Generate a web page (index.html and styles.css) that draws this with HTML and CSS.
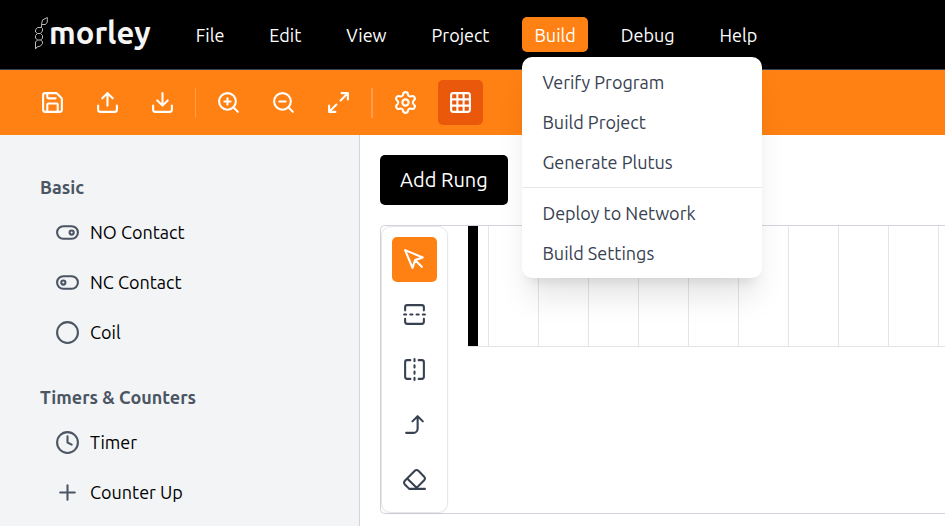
FILE: index.html
```html
<!DOCTYPE html>
<html lang="en">
<head>
<meta charset="utf-8">
<meta name="viewport" content="width=device-width, initial-scale=1">
<title>Morley</title>
<link rel="stylesheet" href="styles.css">
</head>
<body>
<header class="header">
  <a class="logo" href="#" aria-label="morley">
    <svg class="logo-mark" viewBox="0 0 14 34" aria-hidden="true"><path d="M13.3 1.5 L8.5 4 L7.5 8.5 L11.5 8.5 L13.3 6 Z M7.5 8.5 L7.5 11.5 L3.5 11.5 L1.5 14 V16 L3.5 17.5 H6.5 L8.5 15 V12.5 L7.5 11.5 M3.5 17.5 L1.5 19.5 V22 L3.5 24 H6.5 L8.5 22.5 V19.5 L6.5 17.5 M3.5 24 L1.5 26 V33 L3 31 L6.5 30 L8.5 27.5 V25.5 L6.5 24"/></svg>
    <span class="logo-text">morley</span>
  </a>
  <nav class="menubar">
    <button class="menu-button">File</button>
    <button class="menu-button">Edit</button>
    <button class="menu-button">View</button>
    <button class="menu-button">Project</button>
    <div class="menu">
      <button class="menu-button open" aria-expanded="true">Build</button>
      <div class="dropdown">
        <button class="dropdown-item">Verify Program</button>
        <button class="dropdown-item">Build Project</button>
        <button class="dropdown-item">Generate Plutus</button>
        <hr class="dropdown-line">
        <button class="dropdown-item">Deploy to Network</button>
        <button class="dropdown-item">Build Settings</button>
      </div>
    </div>
    <button class="menu-button">Debug</button>
    <button class="menu-button">Help</button>
  </nav>
</header>
<div class="toolbar">
  <button class="tool" aria-label="Save"><svg class="icon" viewBox="0 0 24 24"><path d="M15.2 3a2 2 0 0 1 1.4.6l3.8 3.8a2 2 0 0 1 .6 1.4V19a2 2 0 0 1-2 2H5a2 2 0 0 1-2-2V5a2 2 0 0 1 2-2z"/><path d="M17 21v-7a1 1 0 0 0-1-1H8a1 1 0 0 0-1 1v7M7 3v4a1 1 0 0 0 1 1h7"/></svg></button>
  <button class="tool" aria-label="Upload"><svg class="icon" viewBox="0 0 24 24"><path d="M21 15v4a2 2 0 0 1-2 2H5a2 2 0 0 1-2-2v-4M17 8l-5-5-5 5M12 3v12"/></svg></button>
  <button class="tool" aria-label="Download"><svg class="icon" viewBox="0 0 24 24"><path d="M21 15v4a2 2 0 0 1-2 2H5a2 2 0 0 1-2-2v-4M7 10l5 5 5-5M12 15V3"/></svg></button>
  <span class="divider"></span>
  <button class="tool" aria-label="Zoom in"><svg class="icon" viewBox="0 0 24 24"><circle cx="11" cy="11" r="8"/><path d="M21 21l-4.35-4.35M11 8v6M8 11h6"/></svg></button>
  <button class="tool" aria-label="Zoom out"><svg class="icon" viewBox="0 0 24 24"><circle cx="11" cy="11" r="8"/><path d="M21 21l-4.35-4.35M8 11h6"/></svg></button>
  <button class="tool" aria-label="Fit to view"><svg class="icon" viewBox="0 0 24 24"><path d="M15 3h6v6M9 21H3v-6M21 3l-7 7M3 21l7-7"/></svg></button>
  <span class="divider wide"></span>
  <button class="tool" aria-label="Settings"><svg class="icon" viewBox="0 0 24 24"><path d="M9.671 4.136a2.34 2.34 0 0 1 4.659 0 2.34 2.34 0 0 0 3.319 1.915 2.34 2.34 0 0 1 2.33 4.033 2.34 2.34 0 0 0 0 3.831 2.34 2.34 0 0 1-2.33 4.033 2.34 2.34 0 0 0-3.319 1.915 2.34 2.34 0 0 1-4.659 0 2.34 2.34 0 0 0-3.32-1.915 2.34 2.34 0 0 1-2.33-4.033 2.34 2.34 0 0 0 0-3.831A2.34 2.34 0 0 1 6.35 6.051a2.34 2.34 0 0 0 3.319-1.915"/><circle cx="12" cy="12" r="3"/></svg></button>
  <button class="tool pressed" aria-label="Grid" aria-pressed="true"><svg class="icon" viewBox="0 0 24 24"><rect x="3" y="3" width="18" height="18" rx="2"/><path d="M3 9h18M3 15h18M9 3v18M15 3v18"/></svg></button>
</div>
<div class="workspace">
  <aside class="sidebar">
    <section class="group">
      <h2 class="group-title">Basic</h2>
      <button class="part"><svg class="icon" viewBox="0 0 24 24"><rect x="2" y="6" width="20" height="12" rx="6"/><circle cx="16" cy="12" r="2"/></svg>NO Contact</button>
      <button class="part"><svg class="icon" viewBox="0 0 24 24"><rect x="2" y="6" width="20" height="12" rx="6"/><circle cx="8" cy="12" r="2"/></svg>NC Contact</button>
      <button class="part"><svg class="icon" viewBox="0 0 24 24"><circle cx="12" cy="12" r="10"/></svg>Coil</button>
    </section>
    <section class="group">
      <h2 class="group-title">Timers &amp; Counters</h2>
      <button class="part"><svg class="icon" viewBox="0 0 24 24"><circle cx="12" cy="12" r="10"/><path d="M12 6v6l4 2"/></svg>Timer</button>
      <button class="part"><svg class="icon" viewBox="0 0 24 24"><path d="M5 12h14M12 5v14"/></svg>Counter Up</button>
    </section>
  </aside>
  <main class="editor">
    <button class="add-rung">Add Rung</button>
    <div class="canvas">
      <div class="palette">
        <button class="tool selected" aria-label="Select"><svg class="icon" viewBox="0 0 24 24"><path d="m3 3 7.07 16.97 2.51-7.39 7.39-2.51L3 3zM13 13l6 6"/></svg></button>
        <button class="tool" aria-label="Horizontal line"><svg class="icon" viewBox="0 0 24 24"><path d="M21 8V5a2 2 0 0 0-2-2H5a2 2 0 0 0-2 2v3M21 16v3a2 2 0 0 1-2 2H5a2 2 0 0 1-2-2v-3M4 12H2M10 12H8M16 12h-2M22 12h-2"/></svg></button>
        <button class="tool" aria-label="Vertical line"><svg class="icon" viewBox="0 0 24 24"><path d="M8 3H5a2 2 0 0 0-2 2v14c0 1.1.9 2 2 2h3M16 3h3a2 2 0 0 1 2 2v14a2 2 0 0 1-2 2h-3M12 20v2M12 14v2M12 8v2M12 2v2"/></svg></button>
        <button class="tool" aria-label="Branch"><svg class="icon" viewBox="0 0 24 24"><path d="m10 9 5-5 5 5M4 20h7a4 4 0 0 0 4-4V4"/></svg></button>
        <button class="tool" aria-label="Erase"><svg class="icon" viewBox="0 0 24 24"><path d="m7 21-4.3-4.3c-1-1-1-2.5 0-3.4l9.6-9.6c1-1 2.5-1 3.4 0l5.6 5.6c1 1 1 2.5 0 3.4L13 21M22 21H7M5 11l9 9"/></svg></button>
      </div>
      <div class="rung">
        <div class="rail"></div>
        <div class="cells"></div>
      </div>
    </div>
  </main>
</div>
</body>
</html>
```

FILE: styles.css
```css
* { box-sizing: border-box; }

body {
  margin: 0;
  height: 100vh;
  display: flex;
  flex-direction: column;
  overflow: hidden;
  background: #fff;
  color: #000;
  font: 18px/24px Ubuntu, "Noto Sans", sans-serif;
}

button {
  border: 0;
  padding: 0;
  background: none;
  color: inherit;
  font: inherit;
  cursor: pointer;
}

.icon {
  width: 25px;
  height: 25px;
  flex: none;
  fill: none;
  stroke: currentColor;
  stroke-width: 2;
  stroke-linecap: round;
  stroke-linejoin: round;
}

.header {
  flex: none;
  display: flex;
  align-items: center;
  gap: 33px;
  height: 70px;
  padding-left: 34px;
  background: #000;
  border-bottom: 1px solid #374151;
  color: #fff;
}

.logo {
  display: flex;
  align-items: flex-start;
  gap: 1px;
  padding-bottom: 4px;
  color: #f5f5f5;
  text-decoration: none;
}

.logo-mark {
  width: 14px;
  height: 34px;
  fill: none;
  stroke: #b8b8b8;
  stroke-width: 1;
}

.logo-text { font: bold 31px/34px Ubuntu, Lato, sans-serif; }

.menubar {
  display: flex;
  gap: 21px;
}

.menu { position: relative; }

.menu-button {
  height: 35px;
  padding: 0 12px;
  border-radius: 5px;
}

.menu-button.open { background: #ff8113; }

.dropdown {
  position: absolute;
  z-index: 1;
  top: 40px;
  left: 0;
  width: 240px;
  padding: 5px 0;
  border-radius: 10px;
  background: #fff;
  color: #374151;
  box-shadow: 0 25px 31px -6px rgba(0, 0, 0, .1), 0 10px 12px -7px rgba(0, 0, 0, .1);
}

.dropdown-item {
  display: block;
  width: 100%;
  height: 40px;
  padding: 0 20px;
  text-align: left;
}

.dropdown-line {
  margin: 5px 0;
  border: 0;
  border-top: 1px solid #e5e7eb;
}

.toolbar {
  flex: none;
  display: flex;
  align-items: center;
  gap: 10px;
  padding: 10px 30px;
  background: #ff8113;
  color: #fff;
}

.tool {
  flex: none;
  display: flex;
  align-items: center;
  justify-content: center;
  width: 45px;
  height: 45px;
  border-radius: 5px;
}

.tool.pressed { background: #ea580c; }

.divider {
  width: 1px;
  height: 30px;
  background: #ff9d4a;
}

.divider.wide { width: 2px; }

.workspace {
  flex: 1;
  min-height: 0;
  display: flex;
}

.sidebar {
  flex: none;
  width: 360px;
  padding: 32px 40px;
  overflow: hidden;
  background: #f3f4f6;
  border-right: 1px solid #d1d5db;
}

.group { margin-bottom: 20px; }

.group-title {
  margin: 0;
  color: #4b5563;
  font-size: 18px;
  font-weight: bold;
  line-height: 40px;
}

.part {
  display: flex;
  align-items: center;
  gap: 10px;
  width: 100%;
  height: 50px;
  padding: 0 15px;
}

.part .icon { color: #4b5563; }

.editor {
  flex: 1;
  min-width: 0;
  display: flex;
  flex-direction: column;
  align-items: flex-start;
  gap: 20px;
  padding: 20px 0 12px 20px;
}

.add-rung {
  height: 50px;
  padding: 0 20px;
  border-radius: 5px;
  background: #000;
  color: #fff;
  font-size: 20px;
}

.canvas {
  flex: 1;
  align-self: stretch;
  display: flex;
  align-items: flex-start;
  gap: 20px;
  border: 1px solid #d1d5db;
  border-right: 0;
  border-radius: 5px 0 0 5px;
}

.palette {
  flex: none;
  align-self: stretch;
  display: flex;
  flex-direction: column;
  gap: 10px;
  padding: 10px;
  border: 1px solid #e5e7eb;
  border-radius: 10px;
  color: #374151;
  box-shadow: 0 1px 2px rgba(0, 0, 0, .05);
}

.tool.selected {
  background: #ff8113;
  color: #fff;
}

.rung {
  flex: 1;
  display: flex;
  gap: 10px;
  height: 121px;
  border-bottom: 1px solid #e5e5e5;
}

.rail {
  width: 10px;
  background: #000;
}

.cells {
  flex: 1;
  background: repeating-linear-gradient(to right, #e5e5e5 0 1px, transparent 1px 50px);
}
```
